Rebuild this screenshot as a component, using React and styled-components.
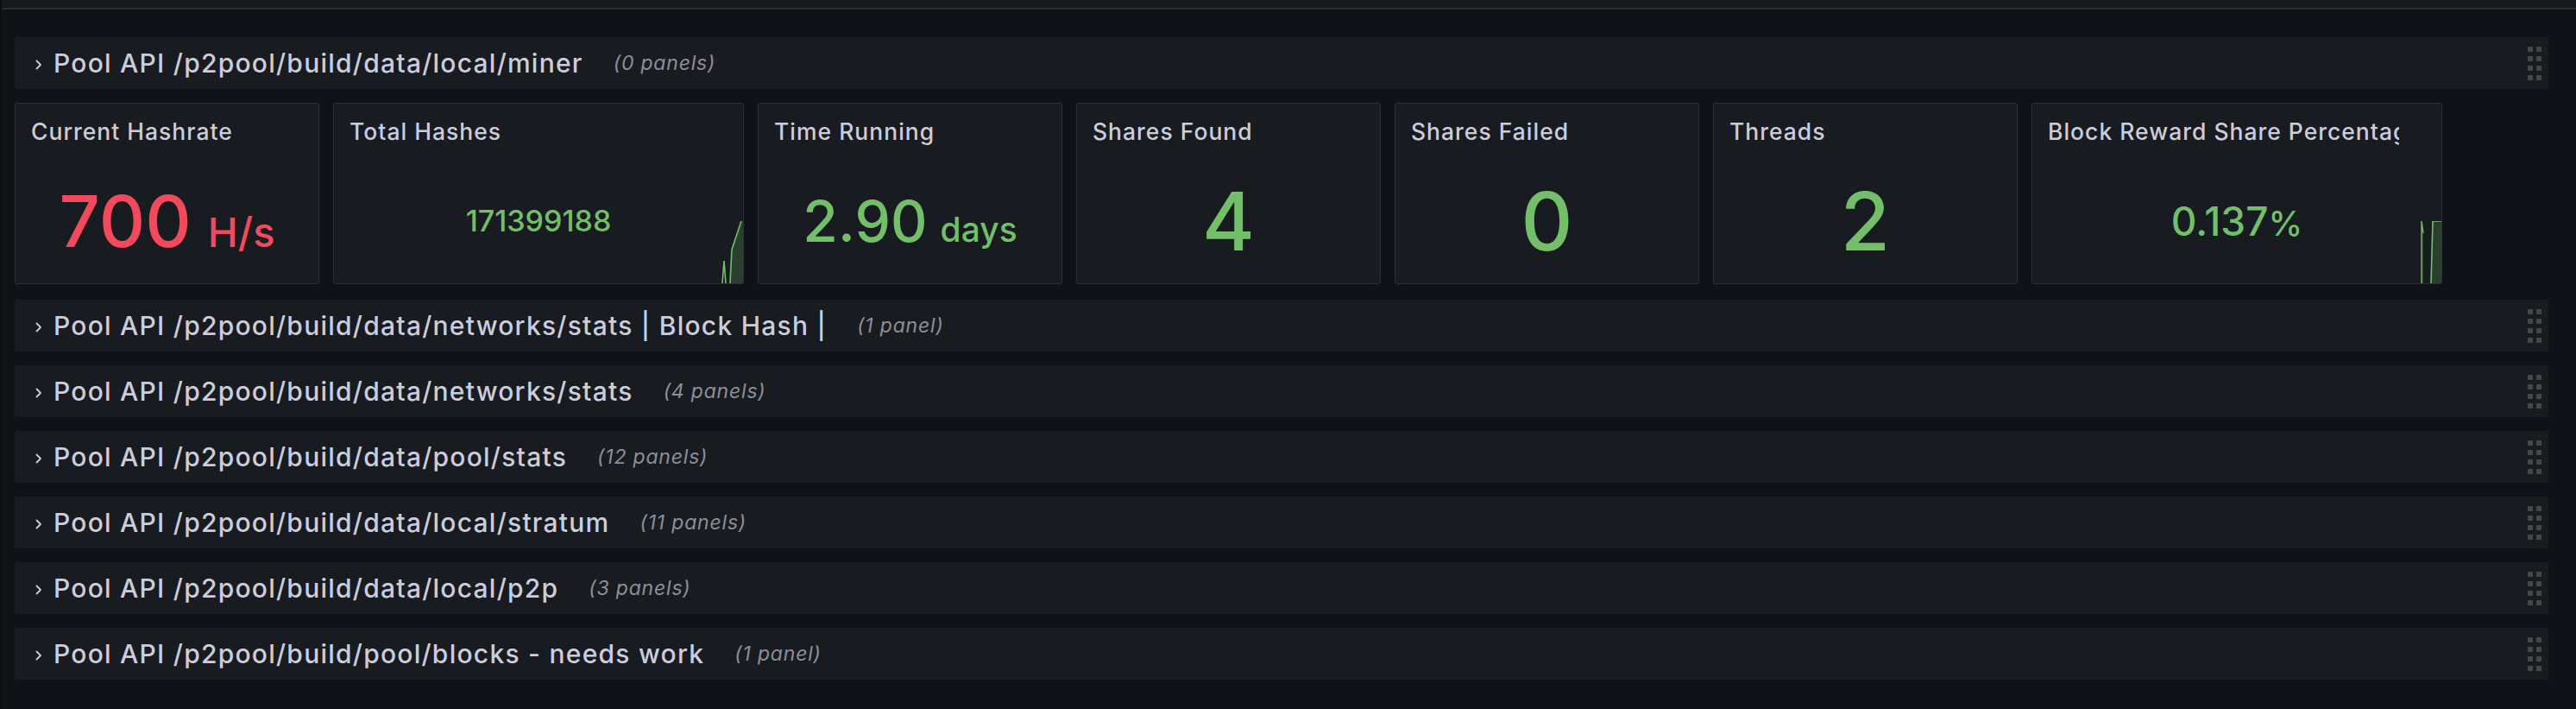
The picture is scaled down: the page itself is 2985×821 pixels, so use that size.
import React from 'react';
import styled, { createGlobalStyle } from 'styled-components';

const Global = createGlobalStyle`
  html, body { margin: 0; padding: 0; background: #111217; }
  body { font-family: Inter, "Noto Sans", "Liberation Sans", sans-serif; }
`;

const Page = styled.div`
  width: 2985px;
  height: 821px;
  box-sizing: border-box;
  background: #111217;
  border-left: 2px solid #0c0d10;
  overflow: hidden;
  display: flex;
  flex-direction: column;
`;

const TopBar = styled.div`
  height: 9px;
  background: #16181c;
  border-bottom: 2px solid #2b2e33;
  flex: none;
`;

const Content = styled.div`
  padding: 32px 32px 0 15px;
  display: flex;
  flex-direction: column;
  gap: 16px;
`;

const RowBar = styled.div`
  height: 60px;
  box-sizing: border-box;
  background: #181b1f;
  display: flex;
  align-items: center;
  padding: 0 8px 0 23px;
`;

const Chevron = styled.svg`
  width: 10px;
  height: 14px;
  flex: none;
  margin-top: 3px;
`;

const RowTitle = styled.span`
  margin-left: 12px;
  font-size: 30px;
  font-weight: 500;
  letter-spacing: 1.25px;
  color: #ccccdc;
  white-space: nowrap;
`;

const PanelCount = styled.span`
  margin-left: 35px;
  font-size: 23px;
  font-style: italic;
  letter-spacing: 0.8px;
  color: #8e8e9b;
  white-space: nowrap;
`;

const Handle = styled.div`
  margin-left: auto;
  display: grid;
  grid-template-columns: repeat(2, 6px);
  column-gap: 4px;
  row-gap: 5px;
`;

const Dot = styled.span`
  width: 6px;
  height: 6px;
  border-radius: 1px;
  background: #45474b;
`;

const PanelGrid = styled.div`
  display: grid;
  grid-template-columns: repeat(24, 1fr);
  column-gap: 16px;
  height: 210px;
  margin-bottom: 2px;
`;

const Panel = styled.div`
  grid-column: span ${(p) => p.$span};
  position: relative;
  box-sizing: border-box;
  background: #181b1f;
  border: 1px solid rgba(204, 204, 220, 0.12);
  border-radius: 3px;
  display: flex;
  flex-direction: column;
  overflow: hidden;
`;

const PanelHeader = styled.div`
  height: 64px;
  flex: none;
  display: flex;
  align-items: center;
  padding: 0 49px 0 18px;
  overflow: hidden;
`;

const PanelTitle = styled.h2`
  margin: 0;
  font-size: 26.5px;
  font-weight: 500;
  letter-spacing: 1px;
  color: #ccccdc;
  white-space: nowrap;
  overflow: hidden;
`;

const PanelBody = styled.div`
  flex: 1;
  display: flex;
  align-items: center;
  justify-content: center;
`;

const ValueLine = styled.div`
  display: flex;
  align-items: baseline;
  line-height: 1;
  color: ${(p) => p.$color};
  font-weight: 500;
  position: relative;
  z-index: 1;
`;

const Value = styled.span`
  font-size: ${(p) => p.$size}px;
`;

const Unit = styled.span`
  font-size: ${(p) => p.$size}px;
  margin-left: ${(p) => p.$gap}px;
`;

const Spark = styled.svg`
  position: absolute;
  right: 0;
  bottom: 0;
  width: 30px;
  height: 72px;
`;

const RED = '#f2495c';
const GREEN = '#73bf69';

const rows = [
  { title: 'Pool API /p2pool/build/data/networks/stats | Block Hash |', count: '(1 panel)' },
  { title: 'Pool API /p2pool/build/data/networks/stats', count: '(4 panels)' },
  { title: 'Pool API /p2pool/build/data/pool/stats', count: '(12 panels)' },
  { title: 'Pool API /p2pool/build/data/local/stratum', count: '(11 panels)' },
  { title: 'Pool API /p2pool/build/data/local/p2p', count: '(3 panels)' },
  { title: 'Pool API /p2pool/build/pool/blocks - needs work', count: '(1 panel)' },
];

function Row({ title, count }) {
  return (
    <RowBar>
      <Chevron viewBox="0 0 10 14">
        <polyline points="2.5,2.5 7,7 2.5,11.5" fill="none" stroke="#ccccdc" strokeWidth="1.8" strokeLinecap="round" strokeLinejoin="round" />
      </Chevron>
      <RowTitle>{title}</RowTitle>
      <PanelCount>{count}</PanelCount>
      <Handle>
        {Array.from({ length: 8 }).map((_, i) => (
          <Dot key={i} />
        ))}
      </Handle>
    </RowBar>
  );
}

function SparkA() {
  return (
    <Spark viewBox="0 0 30 72">
      <path d="M15,72 L17,33 L28,0 L30,0 L30,72 Z" fill="rgba(115,191,105,0.22)" />
      <path d="M6,72 L8,46 L10,72" fill="none" stroke={GREEN} strokeWidth="1.6" />
      <path d="M15,72 L17,33 L28,0" fill="none" stroke={GREEN} strokeWidth="1.6" />
    </Spark>
  );
}

function SparkB() {
  return (
    <Spark viewBox="0 0 30 72">
      <path d="M7,72 L7,0 L9,14 L9,72 Z" fill="rgba(115,191,105,0.22)" />
      <path d="M7,72 L7,0 L9,14" fill="none" stroke={GREEN} strokeWidth="1.4" />
      <path d="M18,72 L20,0 L30,0 L30,72 Z" fill="rgba(115,191,105,0.22)" />
      <path d="M18,72 L20,0 L30,0" fill="none" stroke={GREEN} strokeWidth="1.6" />
    </Spark>
  );
}

const panels = [
  { span: 3, title: 'Current Hashrate', value: '700', size: 83, unit: 'H/s', unitSize: 47, gap: 19, color: RED },
  { span: 4, title: 'Total Hashes', value: '171399188', size: 34, color: GREEN, spark: SparkA },
  { span: 3, title: 'Time Running', value: '2.90', size: 66, unit: 'days', unitSize: 39, gap: 15, color: GREEN },
  { span: 3, title: 'Shares Found', value: '4', size: 93, color: GREEN },
  { span: 3, title: 'Shares Failed', value: '0', size: 93, color: GREEN },
  { span: 3, title: 'Threads', value: '2', size: 93, color: GREEN },
  { span: 4, title: 'Block Reward Share Percentage', value: '0.137', size: 46, unit: '%', unitSize: 40, gap: 0, color: GREEN, spark: SparkB },
];

export default function App() {
  return (
    <Page>
      <Global />
      <TopBar />
      <Content>
        <Row title="Pool API /p2pool/build/data/local/miner" count="(0 panels)" />
        <PanelGrid>
          {panels.map((p) => (
            <Panel key={p.title} $span={p.span}>
              <PanelHeader>
                <PanelTitle>{p.title}</PanelTitle>
              </PanelHeader>
              <PanelBody>
                <ValueLine $color={p.color}>
                  <Value $size={p.size}>{p.value}</Value>
                  {p.unit && (
                    <Unit $size={p.unitSize} $gap={p.gap}>
                      {p.unit}
                    </Unit>
                  )}
                </ValueLine>
              </PanelBody>
              {p.spark && <p.spark />}
            </Panel>
          ))}
        </PanelGrid>
        {rows.map((r) => (
          <Row key={r.title} title={r.title} count={r.count} />
        ))}
      </Content>
    </Page>
  );
}
